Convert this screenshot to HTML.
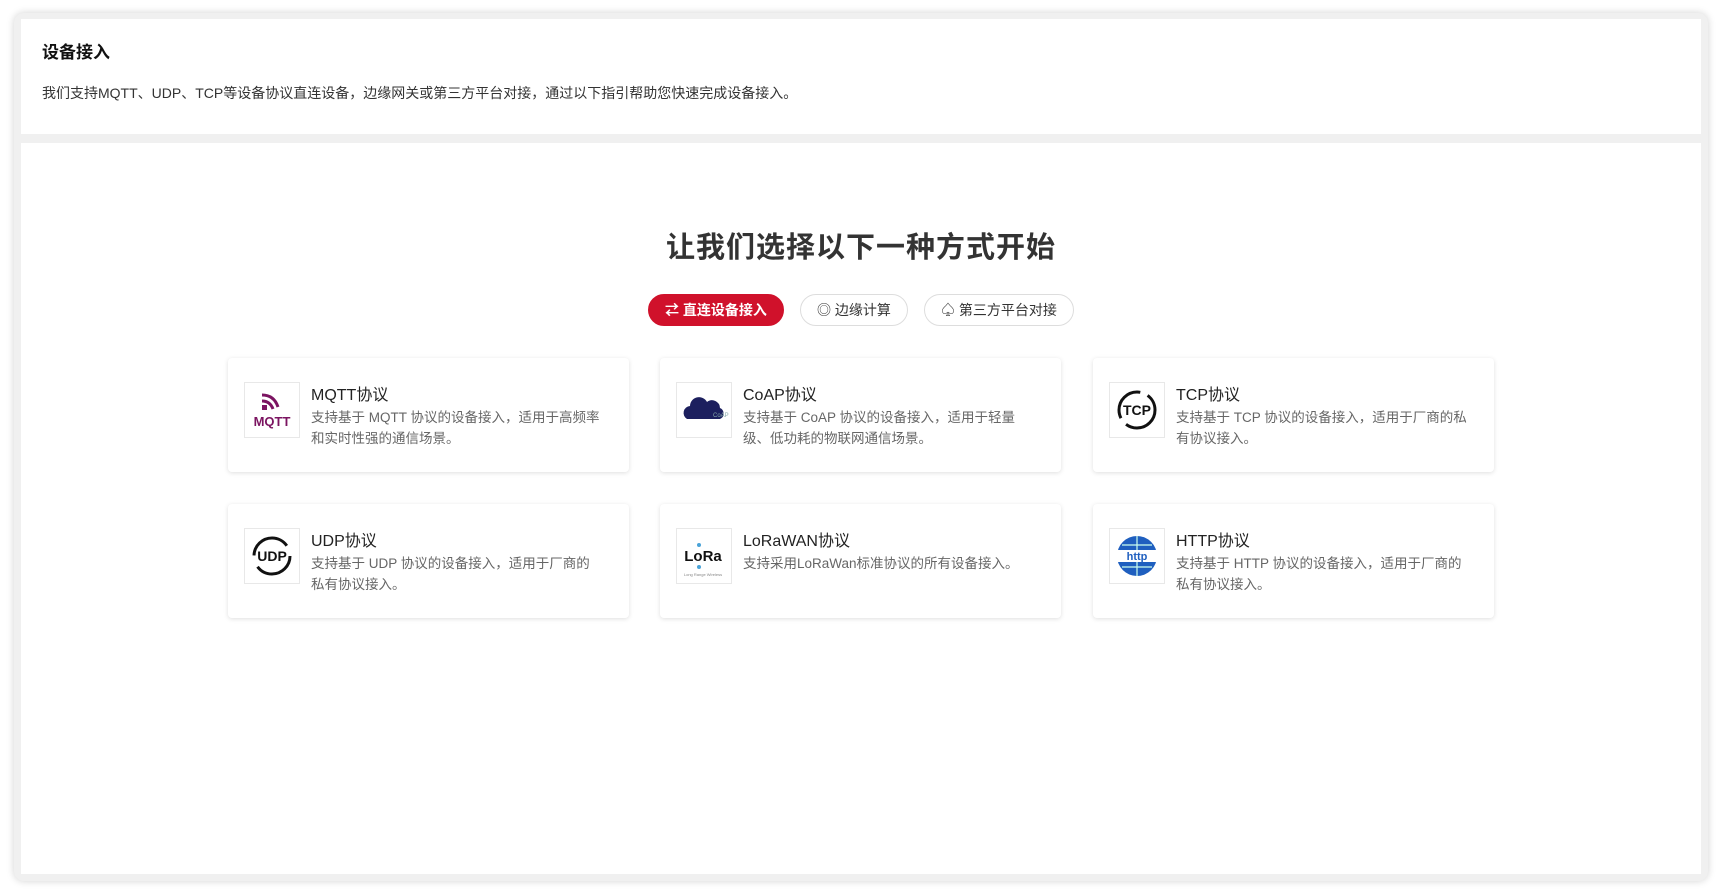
<!DOCTYPE html>
<html><head><meta charset="utf-8"><style>
*{margin:0;padding:0;box-sizing:border-box}
body{width:1722px;height:896px;background:#fff;font-family:"Liberation Sans","Noto Sans CJK SC",sans-serif;position:relative;overflow:hidden}
.frame{position:absolute;left:14px;top:13px;width:1694px;height:868px;background:#f0f0f0;border-radius:10px;box-shadow:0 0 8px rgba(0,0,0,.18)}
.c1{position:absolute;left:21px;top:19px;width:1680px;height:115px;background:#fff}
.c2{position:absolute;left:21px;top:143px;width:1680px;height:731px;background:#fff}
.t1{position:absolute;left:42px;top:38px;font-size:17px;font-weight:bold;color:#111}
.d1{position:absolute;left:42px;top:83px;font-size:14px;color:#333}
h1{position:absolute;left:0;width:1722px;top:224px;text-align:center;font-size:29px;font-weight:bold;color:#333;letter-spacing:1px}
.btn{position:absolute;top:294px;height:32px;border-radius:16px;border:1px solid #ddd;font-size:14px;color:#333;display:flex;align-items:center;justify-content:center;background:#fff}
.btn.r{background:#d0112b;border-color:#d0112b;color:#fff;font-weight:bold}
.card{position:absolute;width:401px;height:114px;background:#fff;border-radius:4px;box-shadow:0 1px 5px rgba(0,0,0,.13)}
.ic{position:absolute;left:16px;top:24px;width:56px;height:56px;border:1px solid #e8e8e8;display:flex;align-items:center;justify-content:center;overflow:hidden}
.ct{position:absolute;left:83px;top:23px;font-size:16px;color:#222}
.cd{position:absolute;left:83px;top:49px;white-space:nowrap;font-size:13.5px;line-height:21px;color:#666}
</style></head><body>
<div class="frame"></div>
<div class="c1"></div><div class="c2"></div>
<div class="t1">设备接入</div>
<div class="d1">我们支持MQTT、UDP、TCP等设备协议直连设备，边缘网关或第三方平台对接，通过以下指引帮助您快速完成设备接入。</div>
<h1>让我们选择以下一种方式开始</h1>
<div class="btn r" style="left:648px;width:136px">⇄&nbsp;直连设备接入</div>
<div class="btn" style="left:800px;width:108px">◎&nbsp;边缘计算</div>
<div class="btn" style="left:924px;width:150px">♤&nbsp;第三方平台对接</div>

<div class="card" style="left:228px;top:358px"><div class="ic"><svg width="50" height="50" viewBox="0 0 50 50"><path d="M15 10 q12 0 16 12" stroke="#7b1461" stroke-width="3" fill="none"/><path d="M15 16 q8 0 11 8" stroke="#7b1461" stroke-width="3" fill="none"/><rect x="15" y="20" width="5" height="5" fill="#7b1461"/><text x="25" y="41" text-anchor="middle" font-size="13" font-weight="bold" fill="#7b1461" font-family="Liberation Sans">MQTT</text></svg></div><div class="ct">MQTT协议</div><div class="cd">支持基于 MQTT 协议的设备接入，适用于高频率<br>和实时性强的通信场景。</div></div>
<div class="card" style="left:660px;top:358px"><div class="ic"><svg width="50" height="50" viewBox="0 0 50 50"><path d="M8 34 a7 7 0 0 1 3-13 a9 9 0 0 1 17-4 a8 8 0 0 1 13 6 a6 6 0 0 1 0 11z" fill="#1c1f5e"/><text x="34" y="32" font-size="6" fill="#8aa" font-family="Liberation Sans">CoAP</text></svg></div><div class="ct">CoAP协议</div><div class="cd">支持基于 CoAP 协议的设备接入，适用于轻量<br>级、低功耗的物联网通信场景。</div></div>
<div class="card" style="left:1093px;top:358px"><div class="ic"><svg width="50" height="50" viewBox="0 0 50 50"><circle cx="25" cy="25" r="18" fill="none" stroke="#111" stroke-width="3" stroke-dasharray="40 8"/><text x="25" y="30" text-anchor="middle" font-size="14" font-weight="bold" fill="#111" font-family="Liberation Sans">TCP</text></svg></div><div class="ct">TCP协议</div><div class="cd">支持基于 TCP 协议的设备接入，适用于厂商的私<br>有协议接入。</div></div>

<div class="card" style="left:228px;top:504px"><div class="ic"><svg width="50" height="50" viewBox="0 0 50 50"><circle cx="25" cy="25" r="18" fill="none" stroke="#111" stroke-width="3" stroke-dasharray="45 12"/><text x="25" y="30" text-anchor="middle" font-size="14" font-weight="bold" fill="#111" font-family="Liberation Sans">UDP</text></svg></div><div class="ct">UDP协议</div><div class="cd">支持基于 UDP 协议的设备接入，适用于厂商的<br>私有协议接入。</div></div>
<div class="card" style="left:660px;top:504px"><div class="ic"><svg width="50" height="50" viewBox="0 0 50 50"><text x="24" y="30" text-anchor="middle" font-size="15" font-weight="bold" fill="#111" font-family="Liberation Sans">LoRa</text><circle cx="20" cy="14" r="2" fill="#4aa3d8"/><circle cx="20" cy="36" r="2" fill="#4aa3d8"/><text x="24" y="45" text-anchor="middle" font-size="4" fill="#888">Long Range Wireless</text></svg></div><div class="ct">LoRaWAN协议</div><div class="cd">支持采用LoRaWan标准协议的所有设备接入。</div></div>
<div class="card" style="left:1093px;top:504px"><div class="ic"><svg width="50" height="50" viewBox="0 0 50 50"><circle cx="25" cy="25" r="20" fill="#1f5fbf"/><path d="M5 25h40M25 5v40M10 14h30M10 36h30" stroke="#cfe" stroke-width="1.2"/><rect x="5" y="19" width="40" height="12" fill="#fff"/><text x="25" y="29" text-anchor="middle" font-size="11" font-weight="bold" fill="#1f5fbf" font-family="Liberation Sans">http</text></svg></div><div class="ct">HTTP协议</div><div class="cd">支持基于 HTTP 协议的设备接入，适用于厂商的<br>私有协议接入。</div></div>
</body></html>
